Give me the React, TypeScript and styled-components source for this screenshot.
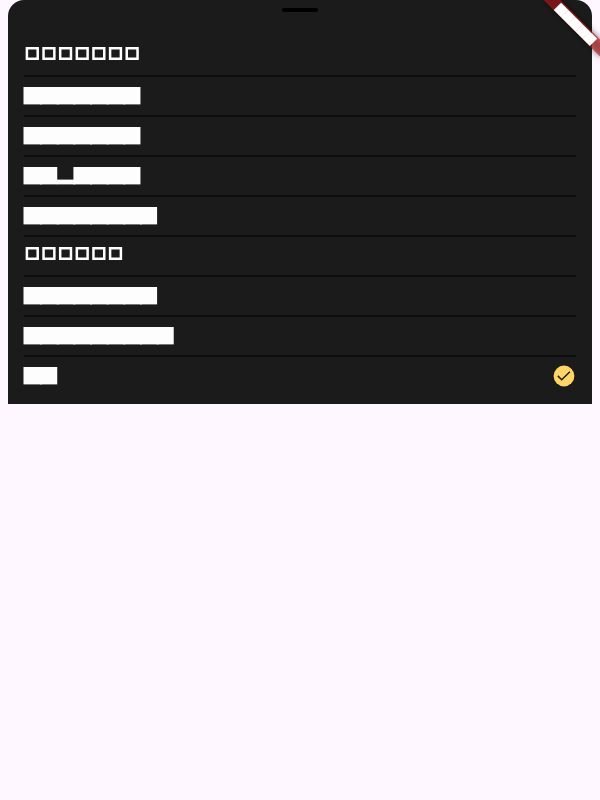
import React from "react";
import styled, { createGlobalStyle } from "styled-components";

const GlobalStyle = createGlobalStyle`
  * { box-sizing: border-box; }
  html, body { margin: 0; background: #fef7ff; }
  body { overflow: hidden; font-family: Roboto, "Liberation Sans", sans-serif; }
`;

const Screen = styled.main`
  position: relative;
  height: 800px;
  padding: 0 8px;
  background: #fef7ff;
  overflow: hidden;
`;

const Sheet = styled.section`
  display: flex;
  flex-direction: column;
  height: 404px;
  padding: 8px 16px 0;
  border-radius: 16px 16px 0 0;
  background: #1b1b1b;
`;

const Handle = styled.div`
  flex: none;
  align-self: center;
  width: 36px;
  height: 4px;
  margin-bottom: 25px;
  border-radius: 2px;
  background: #000;
`;

const Row = styled.div<{ $last?: boolean }>`
  display: flex;
  flex: none;
  align-items: center;
  justify-content: space-between;
  height: ${(p) => (p.$last ? "38px" : "40px")};
  border-bottom: ${(p) => (p.$last ? "0" : "2px solid #0e0e0e")};
`;

const Run = styled.svg`
  display: block;
  flex: none;
  width: 180px;
  height: 20px;
  margin-left: -1px;
  overflow: visible;
`;

const Check = styled.svg`
  display: block;
  flex: none;
  width: 24px;
  height: 24px;
`;

const Banner = styled.svg`
  position: absolute;
  top: 0;
  right: 0;
  width: 80px;
  height: 80px;
`;

type Glyph = "box" | "block" | "low";
const PITCH = 16.64;

/** Placeholder glyphs, one for each character of a label. */
function GlyphRun({ glyphs }: { glyphs: Glyph[] }) {
  return (
    <Run viewBox="0 0 180 20" aria-hidden>
      {glyphs.map((g, i) => {
        const x = 0.5 + i * PITCH;
        if (g === "box")
          return <rect key={i} x={x + 3.4} y={2.25} width={10.8} height={10.5} fill="none" stroke="#fff" strokeWidth={2.5} />;
        // Neighbours of the same kind overlap so that no seam shows between them.
        const width = i === glyphs.length - 1 || (g === "block" && glyphs[i + 1] === "low") ? 17.1 : 18.5;
        const low = g === "low";
        return <rect key={i} x={x} y={low ? 13.6 : 1} width={width} height={low ? 4.8 : 17.4} fill="#fdfdfd" />;
      })}
    </Run>
  );
}

const fill = (g: Glyph, n: number): Glyph[] => Array.from({ length: n }, () => g);

const rows: Glyph[][] = [
  fill("box", 7),
  fill("block", 7),
  fill("block", 7),
  [...fill("block", 2), "low", ...fill("block", 4)],
  fill("block", 8),
  fill("box", 6),
  fill("block", 8),
  fill("block", 9),
  fill("block", 2),
];

export default function App() {
  return (
    <>
      <GlobalStyle />
      <Screen>
        <Sheet>
          <Handle />
          {rows.map((glyphs, i) => {
            const last = i === rows.length - 1;
            return (
              <Row key={i} $last={last}>
                <GlyphRun glyphs={glyphs} />
                {last && (
                  <Check viewBox="0 0 24 24">
                    <circle cx="12" cy="12" r="10.4" fill="#ffd566" />
                    <path d="M5.8 11.9L9.7 15.7L17.9 7.7" fill="none" stroke="#1b1b1b" strokeWidth="1.5" />
                  </Check>
                )}
              </Row>
            );
          })}
        </Sheet>
        <Banner viewBox="0 0 80 80">
          <defs>
            <filter id="soft" x="-50%" y="-200%" width="200%" height="500%">
              <feGaussianBlur stdDeviation="3" />
            </filter>
          </defs>
          <g transform="translate(80 0) rotate(45)">
            <rect x="-40" y="28" width="80" height="12" fill="#000" fillOpacity=".5" filter="url(#soft)" />
            <rect x="-40" y="28" width="80" height="12" fill="#b71c1c" fillOpacity=".627" />
            <rect x="-25.6" y="29.4" width="51" height="10.4" fill="#fff" />
            {[1, 2, 3, 4].map((i) => (
              <rect key={i} x={-25.7 + i * 10.2} y="29.4" width="0.2" height="10.4" fill="#b71c1c" fillOpacity=".4" />
            ))}
          </g>
        </Banner>
      </Screen>
    </>
  );
}
